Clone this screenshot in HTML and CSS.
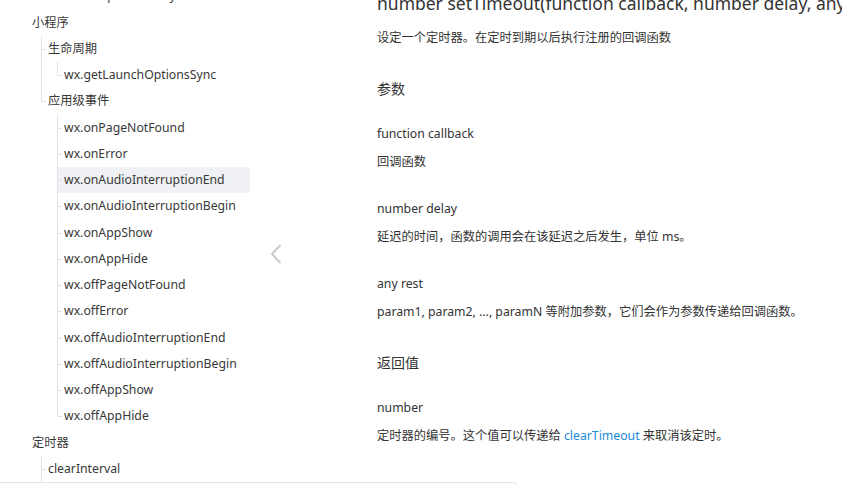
FILE: index.html
```html
<!DOCTYPE html>
<html lang="zh-CN">
<head>
    <meta charset="UTF-8">
    <meta name="viewport" content="width=device-width, initial-scale=1.0">
    <title>setTimeout - 定时器</title>
    <link rel="stylesheet" href="styles.css">
</head>
<body>
    <div class="layout">
        <!-- 左侧目录 -->
        <aside class="sidebar">
            <ul class="tree">
                <li class="tree-cut">
                    <ul>
                        <li>
                            <ul>
                                <li><a href="#">wx.onUpdateReady</a></li>
                            </ul>
                        </li>
                    </ul>
                </li>
                <li>
                    <a href="#">小程序</a>
                    <ul>
                        <li>
                            <a href="#">生命周期</a>
                            <ul>
                                <li><a href="#">wx.getLaunchOptionsSync</a></li>
                            </ul>
                        </li>
                        <li>
                            <a href="#">应用级事件</a>
                            <ul>
                                <li><a href="#">wx.onPageNotFound</a></li>
                                <li><a href="#">wx.onError</a></li>
                                <li><a href="#" class="active">wx.onAudioInterruptionEnd</a></li>
                                <li><a href="#">wx.onAudioInterruptionBegin</a></li>
                                <li><a href="#">wx.onAppShow</a></li>
                                <li><a href="#">wx.onAppHide</a></li>
                                <li><a href="#">wx.offPageNotFound</a></li>
                                <li><a href="#">wx.offError</a></li>
                                <li><a href="#">wx.offAudioInterruptionEnd</a></li>
                                <li><a href="#">wx.offAudioInterruptionBegin</a></li>
                                <li><a href="#">wx.offAppShow</a></li>
                                <li><a href="#">wx.offAppHide</a></li>
                            </ul>
                        </li>
                    </ul>
                </li>
                <li>
                    <a href="#">定时器</a>
                    <ul>
                        <li><a href="#">clearInterval</a></li>
                        <li><a href="#">clearTimeout</a></li>
                    </ul>
                </li>
            </ul>
        </aside>

        <!-- 收起按钮 -->
        <div class="collapse">
            <button class="collapse-btn" aria-label="收起目录">
                <svg width="12" height="20" viewBox="0 0 12 20">
                    <path d="M10 1.5 L2 10 L10 18.5" fill="none" stroke="#c9cbd0" stroke-width="2" stroke-linecap="round" stroke-linejoin="round"/>
                </svg>
            </button>
        </div>

        <!-- 正文 -->
        <main class="content">
            <h1 class="api-title">number setTimeout(function callback, number delay, any rest)</h1>
            <p class="desc">设定一个定时器。在定时到期以后执行注册的回调函数</p>

            <h2 class="section">参数</h2>
            <div class="param">
                <p class="param-name">function callback</p>
                <p class="desc">回调函数</p>
            </div>
            <div class="param">
                <p class="param-name">number delay</p>
                <p class="desc">延迟的时间，函数的调用会在该延迟之后发生，单位 ms。</p>
            </div>
            <div class="param">
                <p class="param-name">any rest</p>
                <p class="desc">param1, param2, ..., paramN 等附加参数，它们会作为参数传递给回调函数。</p>
            </div>

            <h2 class="section">返回值</h2>
            <div class="param">
                <p class="param-name">number</p>
                <p class="desc">定时器的编号。这个值可以传递给 <a href="#" class="link">clearTimeout</a> 来取消该定时。</p>
            </div>
        </main>
    </div>

    <!-- 底部浮层 -->
    <div class="bottom-panel"></div>
</body>
</html>
```

FILE: styles.css
```css
/* 通用 */
body {
    margin: 0;
    height: 100vh;
    overflow: hidden;
    background-color: #fff;
    color: #333;
    font-family: "Noto Sans", "Noto Sans CJK SC", sans-serif;
    font-size: 12.25px;
}

.layout {
    display: flex;
    align-items: flex-start;
}

/* 左侧目录 */
.sidebar {
    width: 250px;
    flex-shrink: 0;
    padding-left: 25px;
    box-sizing: border-box;
}

.tree,
.tree ul {
    list-style: none;
    margin: 0;
    padding: 0;
}

.tree {
    margin-top: -16.6px;
}

.tree ul {
    margin-left: 16px;
}

.tree li {
    position: relative;
}

.tree a {
    display: block;
    height: 26.25px;
    line-height: 26.25px;
    padding-left: 7px;
    color: #383838;
    text-decoration: none;
    white-space: nowrap;
}

.tree a.active {
    background-color: #eff1f4;
}

/* 目录连线 */
.tree ul > li::before {
    content: '';
    position: absolute;
    left: 0;
    top: 0;
    bottom: 0;
    border-left: 1px solid #e3e3e3;
}

.tree ul > li:last-child::before {
    bottom: auto;
    height: 13px;
}

.tree ul > li::after {
    content: '';
    position: absolute;
    left: 0;
    top: 13px;
    width: 5px;
    border-top: 1px solid #e3e3e3;
}

/* 收起按钮 */
.collapse {
    width: 52px;
    flex-shrink: 0;
    padding-top: 244px;
    display: flex;
    justify-content: center;
}

.collapse-btn {
    background: none;
    border: none;
    padding: 0;
    cursor: pointer;
}

/* 正文 */
.content {
    padding-left: 75px;
    white-space: nowrap;
}

.api-title {
    margin: -10px 0 0;
    font-size: 17.5px;
    font-weight: normal;
    line-height: 26px;
    color: #333;
}

.content p {
    margin: 0;
    line-height: 21px;
}

.api-title + .desc {
    margin-top: 11px;
}

.section {
    margin: 30px 0 0;
    font-size: 14px;
    font-weight: normal;
    line-height: 21px;
    color: #333;
}

.section + .param {
    margin-top: 24px;
}

.param + .param {
    margin-top: 26px;
}

.param .desc {
    margin-top: 7px;
}

.link {
    color: #1a89d6;
    text-decoration: none;
}

/* 底部浮层 */
.bottom-panel {
    position: fixed;
    left: 0;
    top: 482px;
    width: 517px;
    height: 30px;
    background-color: #fff;
    border: 1px solid #e3e3e3;
    border-left: none;
    border-radius: 0 6px 0 0;
}
```
